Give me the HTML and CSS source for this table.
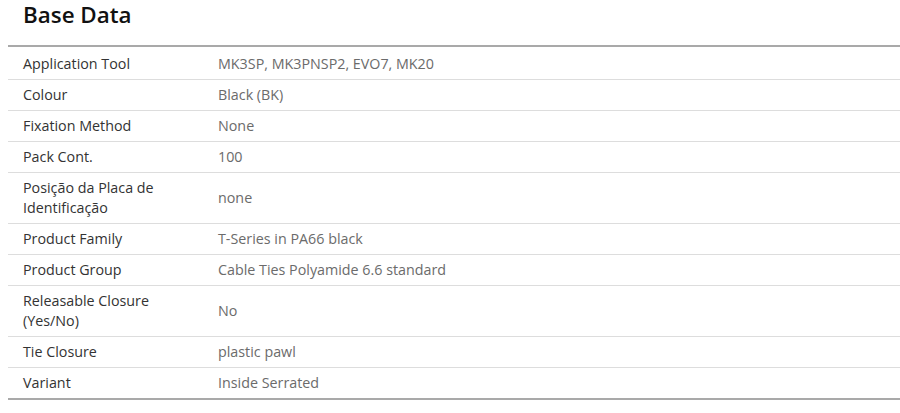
FILE: index.html
```html
<!DOCTYPE html>
<html lang="en">
<head>
<meta charset="utf-8">
<title>Base Data</title>
<link rel="stylesheet" href="styles.css">
</head>
<body>
<section class="base-data">
  <h2 class="title">Base Data</h2>
  <table class="data-table">
    <tbody>
      <tr><th>Application Tool</th><td>MK3SP, MK3PNSP2, EVO7, MK20</td></tr>
      <tr><th>Colour</th><td>Black (BK)</td></tr>
      <tr><th>Fixation Method</th><td>None</td></tr>
      <tr><th>Pack Cont.</th><td>100</td></tr>
      <tr><th>Posição da Placa de Identificação</th><td>none</td></tr>
      <tr><th>Product Family</th><td>T-Series in PA66 black</td></tr>
      <tr><th>Product Group</th><td>Cable Ties Polyamide 6.6 standard</td></tr>
      <tr><th>Releasable Closure (Yes/No)</th><td>No</td></tr>
      <tr><th>Tie Closure</th><td>plastic pawl</td></tr>
      <tr><th>Variant</th><td>Inside Serrated</td></tr>
    </tbody>
  </table>
</section>
</body>
</html>
```
FILE: styles.css
```css
html, body {
  background: #ffffff;
}
body {
  margin: 0 0 0 8px;
  font-family: "Open Sans", "DejaVu Sans", sans-serif;
  font-size: 14.3px;
  color: #333333;
}
.title {
  margin: 0 0 15px 15px;
  font-size: 22.4px;
  line-height: 30px;
  font-weight: 600;
  color: #111111;
}
.data-table {
  width: 100%;
  border-collapse: collapse;
  border-top: 2px solid #a9a9a9;
  border-bottom: 2px solid #a9a9a9;
}
.data-table tr {
  border-bottom: 1px solid #dddddd;
}
.data-table tr:last-child {
  border-bottom: none;
}
.data-table th,
.data-table td {
  padding: 5px 15px;
  line-height: 20px;
  text-align: left;
  vertical-align: middle;
  font-weight: 400;
}
.data-table tr:first-child th,
.data-table tr:first-child td {
  padding-top: 7px;
}
.data-table th {
  width: 180px;
  color: #333333;
}
.data-table td {
  padding-left: 0;
  color: #6b6b6b;
}
```
